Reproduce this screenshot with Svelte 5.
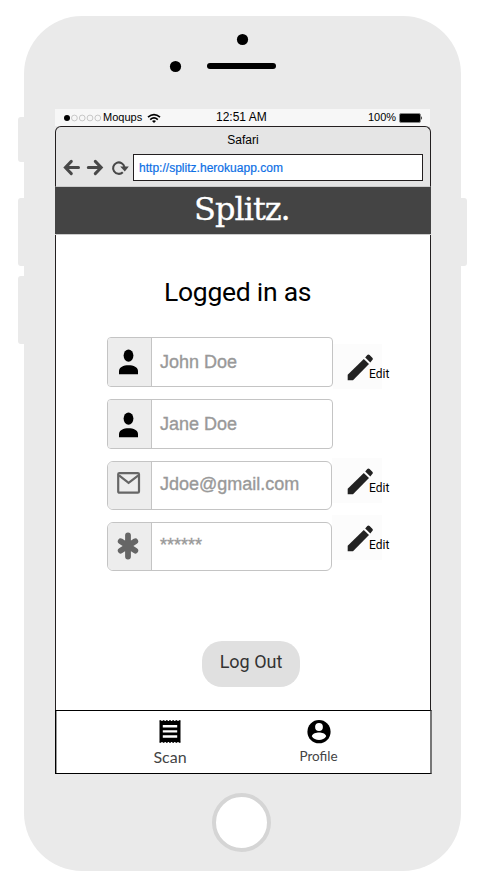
<script>
  const fields = [
    { icon: 'person', value: 'John Doe', edit: true },
    { icon: 'person', value: 'Jane Doe', edit: false },
    { icon: 'mail', value: 'Jdoe@gmail.com', edit: true },
    { icon: 'asterisk', value: '******', edit: true }
  ];
</script>

<div class="phone">
  <i class="side s1"></i><i class="side s2"></i><i class="side s3"></i><i class="side s4"></i>
  <svg class="sensors" width="437" height="93" viewBox="0 0 437 93">
    <circle cx="218.5" cy="23.5" r="5.6" />
    <circle cx="151.5" cy="50.5" r="5.6" />
    <rect x="183" y="47" width="69" height="6" rx="3" />
  </svg>

  <div class="screen">
    <div class="status">
      <svg class="dots" width="40" height="10" viewBox="0 0 40 10">
        <circle cx="4" cy="5" r="3" />
        {#each [11.4, 19.2, 27, 34.8] as cx}
          <circle {cx} cy="5" r="2.9" fill="none" stroke="#999" stroke-width=".5" />
        {/each}
      </svg>
      <span class="carrier">Moqups</span>
      <svg class="wifi" width="14" height="11" viewBox="0 0 14 11" fill="none" stroke="#000" stroke-width="1.7">
        <path d="M1 4.2Q7 -1 13 4.2M3.2 6.6Q7 3.2 10.8 6.6" />
        <path d="M7 10L5 7.9Q7 6.5 9 7.9Z" fill="#000" stroke="none" />
      </svg>
      <span class="time">12:51 AM</span>
      <span class="percent">100%</span>
      <svg class="battery" width="24" height="10" viewBox="0 0 24 10">
        <rect x=".5" y=".5" width="21" height="9" rx="1.5" fill="#000" stroke="#888" />
        <path d="M22.2 3Q24 5 22.2 7Z" />
      </svg>
    </div>

    <div class="browser">
      <div class="title">Safari</div>
      <div class="bar">
        <svg width="70" height="20" viewBox="0 0 70 20" fill="none" stroke="#484848" stroke-width="3">
          <path d="M8.3 3.4L2.4 9.5L8.3 15.6M2.8 9.5H15.5" stroke-linecap="round" />
          <path d="M32.3 3.4L38.2 9.5L32.3 15.6M37.8 9.5H25.3" stroke-linecap="round" />
          <path d="M59.8 14.2A5.7 5.7 0 1 1 61.4 9" stroke-width="2.1" />
          <path d="M57.2 8.4H65.8L61.8 13.4Z" fill="#484848" stroke="none" />
        </svg>
        <div class="url"><span>http://splitz.herokuapp.com</span></div>
      </div>
    </div>

    <header><span>Splitz.</span></header>

    <main>
      <h1>Logged in as</h1>
      <div class="form">
        {#each fields as f, i}
          <div class="row" class:late={i > 1}>
            <div class="field">
              <div class="icon">
                {#if f.icon === 'person'}
                  <svg class:lower={i === 1} width="20" height="26" viewBox="0 0 20 26">
                    <ellipse cx="9.5" cy="6.6" rx="4.9" ry="6.2" />
                    <path d="M0 25.2V22C0 18 4.6 16.2 9.5 16.2S19 18 19 22V25.2Z" />
                  </svg>
                {:else if f.icon === 'mail'}
                  <svg class="mail" width="24" height="22" viewBox="0 0 24 22" fill="none" stroke="#666" stroke-width="2.2">
                    <rect x="1.2" y="1.1" width="20.8" height="19.6" rx="1.2" />
                    <path d="M2 3.3L11.6 10.8L21.4 3.3" />
                  </svg>
                {:else}
                  <svg class="ast" width="22" height="28" viewBox="0 0 22 28" stroke="#666" stroke-width="5.8" stroke-linecap="round">
                    <path d="M11 3.3V24.5M3.7 9.2L18.3 18.6M18.3 9.2L3.7 18.6" />
                  </svg>
                {/if}
              </div>
              <span class="value">{f.value}</span>
            </div>
            {#if f.edit}
              <div class="edit">
                <svg width="26" height="27" viewBox="0 0 26 27" fill="#222">
                  <path d="M.7 26.2V20.7L16.8 4.9L22 10.1L6 26.2Z" />
                  <path d="M18.2 3.4L20.3 1.1Q21.4 0 22.6 1.1L25.3 3.8Q26.4 4.9 25.3 6L23.3 8.4Z" />
                </svg>
                <span>Edit</span>
              </div>
            {/if}
          </div>
        {/each}
      </div>
      <button>Log Out</button>
    </main>

    <footer>
      <div class="tab scan">
        <svg width="22" height="23" viewBox="0 0 22 23">
          <rect x=".5" y="1" width="21" height="21" />
          <path d="M.5 .7H21.5M.5 22.3H21.5" stroke="#000" stroke-width="1" stroke-dasharray="1.8 1.4" />
          <path d="M3.8 6.3H18.2M3.8 11.4H18.2M3.8 16.5H18.2" stroke="#fff" stroke-width="2.4" />
        </svg>
        <span>Scan</span>
      </div>
      <div class="tab profile">
        <svg width="24" height="24" viewBox="0 0 24 24">
          <circle cx="12" cy="11.7" r="11.6" />
          <circle cx="12" cy="7" r="3.9" fill="#fff" />
          <path d="M4.8 16.2C5.5 13.7 9.3 12.6 12 12.6S18.5 13.7 19.2 16.2C17.7 18.7 15 19.9 12 19.9S6.3 18.7 4.8 16.2Z" fill="#fff" />
        </svg>
        <span>Profile</span>
      </div>
    </footer>
  </div>

  <div class="home"></div>
</div>

<style>
  :global(body) { background: #fff; }
  .phone {
    position: relative;
    box-sizing: border-box;
    width: 437px;
    height: 855px;
    margin: 16px 0 13px 24px;
    display: flex;
    flex-direction: column;
    background: #eaeaea;
    border-radius: 58px;
    font-family: "Liberation Sans", Arial, sans-serif;
    color: #000;
  }
  svg { display: block; flex: none; }
  .side { position: absolute; left: -6px; width: 6px; height: 68px; background: #eaeaea; border-radius: 3px 0 0 3px; }
  .s1 { top: 101px; height: 45px; }
  .s2 { top: 182px; }
  .s3 { top: 260px; }
  .s4 { top: 182px; left: 437px; border-radius: 0 3px 3px 0; }
  .screen { width: 377px; height: 665px; margin-left: 31px; display: flex; flex-direction: column; }
  .status { width: 375px; height: 17px; display: flex; align-items: center; background: #f7f7f7; font-size: 11px; line-height: 17px; white-space: nowrap; }
  .dots { margin-left: 8px; }
  .carrier { width: 44px; }
  .wifi { margin-top: 1px; }
  .time { font-size: 12px; margin-left: 55px; width: 152px; }
  .percent { width: 31px; }
  .browser { box-sizing: border-box; width: 376px; height: 61px; background: #e5e5e5; border: 1px solid #231f20; border-bottom: 1px solid #ccc; border-radius: 6px 6px 0 0; }
  .title { font-size: 12px; line-height: 26px; height: 27px; text-align: center; }
  .bar { display: flex; align-items: center; height: 27px; padding-left: 7px; }
  .url { box-sizing: border-box; width: 290px; height: 27px; border: 1px solid #231f20; background: #fff; padding-left: 5px; font-size: 12px; line-height: 26px; color: #0d6fe5; -webkit-text-stroke: .2px #0d6fe5; }
  .url span { letter-spacing: .02px; }
  header { width: 376px; height: 47px; background: #444; color: #fff; font-family: "DejaVu Serif", serif; font-size: 32px; line-height: 45px; letter-spacing: -1px; -webkit-text-stroke: .3px #fff; border-bottom: 1px solid #ccc; }
  header span { margin-left: 139px; }
  main { box-sizing: border-box; width: 376px; height: 475px; background: #fff; border: solid #231f20; border-width: 0 1px; display: flex; flex-direction: column; }
  h1 { margin: 41px 0 0 108px; font: 400 26.5px/32px Roboto, sans-serif; letter-spacing: -.27px; white-space: nowrap; }
  .form { margin: 29px 0 0 51px; display: flex; flex-direction: column; gap: 12px; }
  .row { display: flex; height: 50px; }
  .field { box-sizing: border-box; width: 226px; border: 1px solid #c4c4c4; border-radius: 4px; display: flex; overflow: hidden; }
  .late { height: 49px; }
  .late .field { width: 225px; border-radius: 6px; }
  .icon { box-sizing: border-box; width: 44px; background: #ededed; border-right: 1px solid #c4c4c4; padding: 11px 0 0 11px; }
  .lower { margin-top: 1px; }
  .mail { margin: -1px 0 0 -2px; }
  .ast { margin: -2px 0 0 -2px; }
  .value { margin-left: 8px; font-size: 18px; line-height: 48px; color: #999; -webkit-text-stroke: .35px #999; }
  .late .value { line-height: 45px; }
  .edit { width: 49px; height: 45px; margin-top: 7px; background: #fcfcfc; display: flex; }
  .edit svg { margin: 10px 0 0 14px; }
  .edit span { margin: 21px 0 0 -4px; font: 12px/18px Roboto, sans-serif; }
  .late .edit { width: 50px; margin-top: -3px; }
  .late .edit svg { margin-left: 15px; }
  .row:last-child .edit { margin-top: -7px; }
  button { width: 98px; height: 46px; flex: none; margin: 70px 0 0 146px; padding: 0 0 6px; border: 0; border-radius: 20px; background: #e0e0e0; color: #333; font: 18px Roboto, sans-serif; }
  footer { box-sizing: border-box; width: 377px; height: 64px; background: #fff; border: 1px solid #000; border-right: 2px solid #777; box-shadow: inset 1px 0 #999; display: flex; color: #444; font-family: Lato, sans-serif; }
  .tab { display: flex; flex-direction: column; align-items: center; width: 60px; }
  .scan { margin: 9px 0 0 84px; font-size: 16px; line-height: 20px; }
  .scan span { margin-top: 4px; }
  .profile { margin: 9px 0 0 89px; font-size: 13.5px; line-height: 18px; }
  .profile span { margin: 3px 1px 0 0; }
  .home { box-sizing: border-box; width: 59px; height: 59px; margin: 19px 0 0 188px; border: 4px solid #d5d5d5; border-radius: 50%; background: #fff; }
</style>
